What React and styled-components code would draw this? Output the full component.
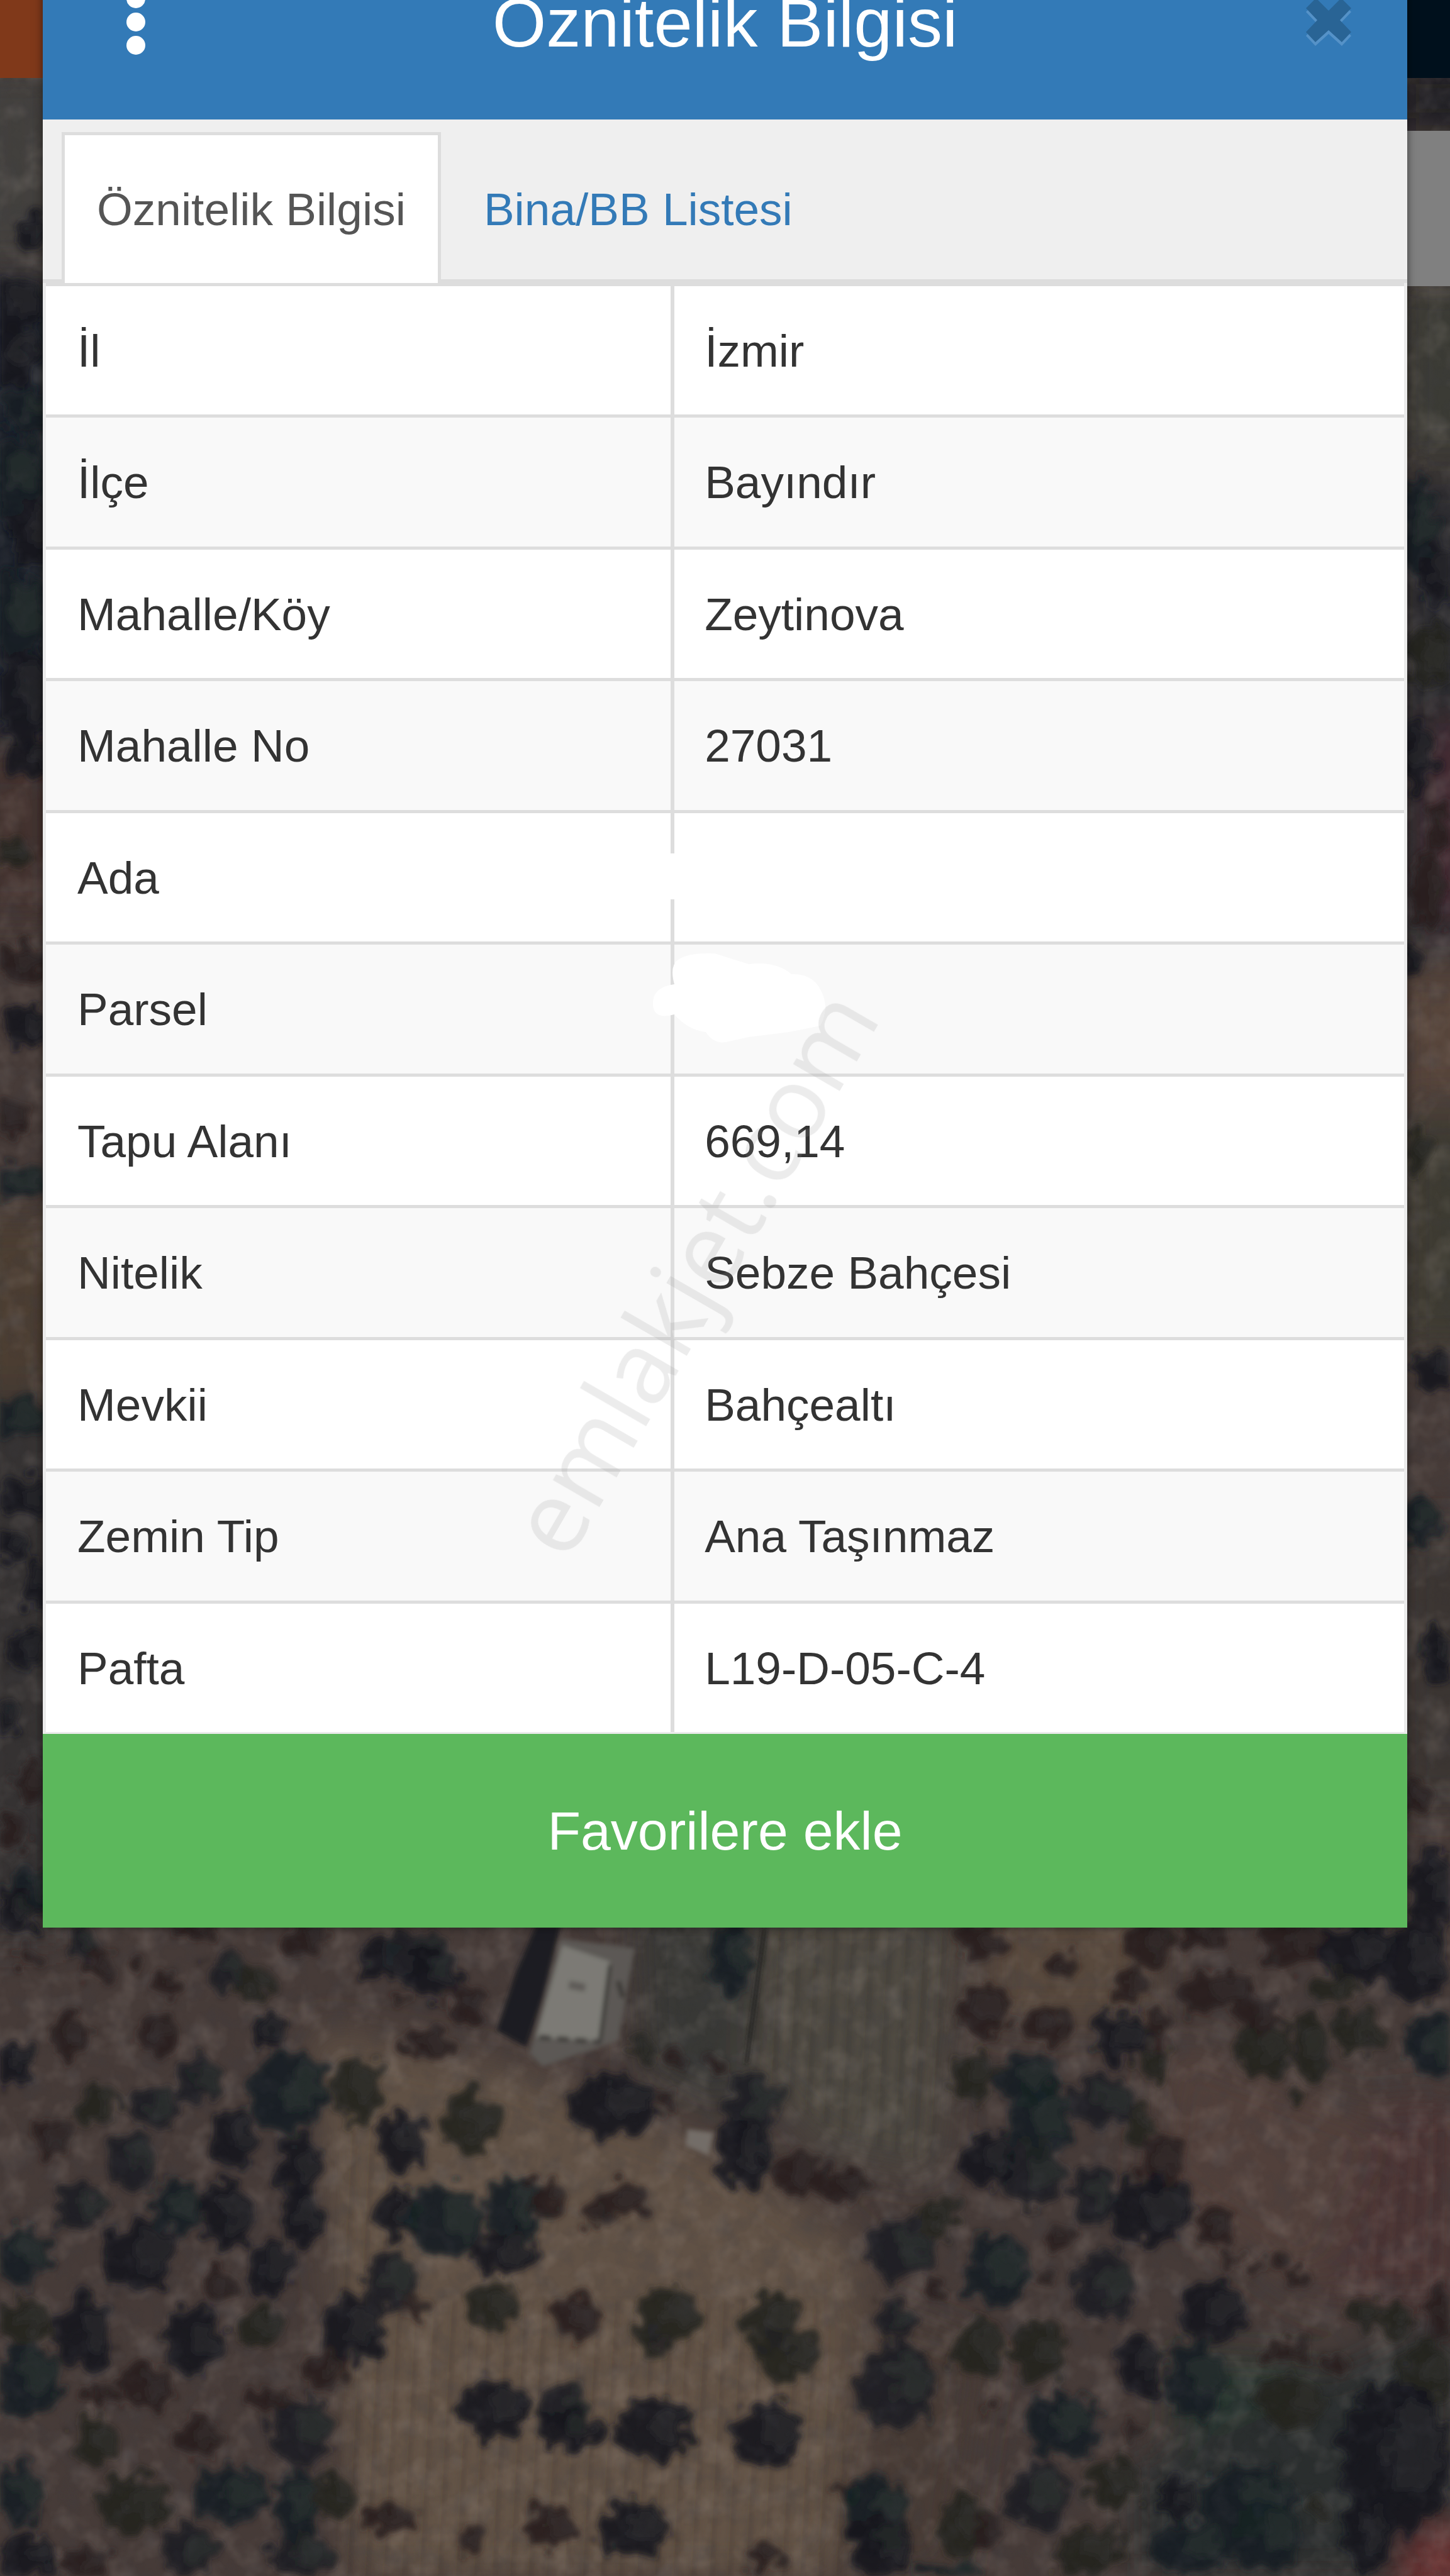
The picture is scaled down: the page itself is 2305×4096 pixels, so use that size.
import React, { useState } from 'react'
import styled, { createGlobalStyle } from 'styled-components'

const GlobalStyle = createGlobalStyle`
  * {
    box-sizing: border-box;
  }
  body {
    margin: 0;
    background: #3f3835;
    font-family: "Liberation Sans", Arial, sans-serif;
  }
`

const Page = styled.div`
  position: relative;
  min-height: 100vh;
  overflow: hidden;
`

const MapLayer = styled.svg`
  position: absolute;
  inset: 0;
  width: 100%;
  height: 100%;
`

const AppBar = styled.div`
  position: absolute;
  top: 0;
  left: 0;
  right: 0;
  height: 124px;
  background: linear-gradient(90deg, #80391a 50%, #00101c 50%);
`

const SidePanel = styled.div`
  position: absolute;
  top: 208px;
  right: 0;
  width: 120px;
  height: 247px;
  background: #808080;
`

/* the top of the dialog is scrolled out of view */
const Modal = styled.main`
  position: relative;
  margin: -120px 68px 0;
  background: #fff;
  box-shadow: 0 0 14px rgba(0, 0, 0, 0.5);
`

const Header = styled.header`
  display: grid;
  grid-template-columns: 180px 1fr 180px;
  align-items: center;
  justify-items: center;
  height: 310px;
  padding: 0 35px;
  background: #337ab7;
`

const Title = styled.h1`
  margin: 0;
  color: #fff;
  font-size: 110px;
  font-weight: 400;
`

const IconButton = styled.button`
  display: flex;
  padding: 20px;
  border: none;
  background: transparent;
  cursor: pointer;
`

const MenuButton = styled(IconButton)`
  justify-self: end;
  padding-right: 50px;
`

const Tabs = styled.div`
  display: flex;
  gap: 12px;
  padding: 20px 30px 0;
  background: #efefef;
  box-shadow: inset 0 -6px 0 #ddd;
`

const Tab = styled.button`
  height: 240px;
  padding: 0 51px;
  border: 5px solid ${(props) => (props.$active ? '#ddd' : 'transparent')};
  border-bottom: none;
  background: ${(props) => (props.$active ? '#fff' : 'transparent')};
  color: ${(props) => (props.$active ? '#555' : '#337ab7')};
  font-family: inherit;
  font-size: 73px;
  cursor: pointer;
`

const InfoTable = styled.table`
  width: 100%;
  table-layout: fixed;
  border-collapse: separate;
  border-spacing: 0;
  border: 5px solid #ebebeb;
  border-width: 0 5px 3px;
`

const Row = styled.tr`
  height: 209px;
  background: #fff;

  &:nth-child(even) {
    height: 210px;
    background: #f9f9f9;
  }
`

const Label = styled.th`
  width: 46%;
  padding: 0 50px;
  border-top: 5px solid #ddd;
  color: #333;
  font-size: 73px;
  font-weight: 400;
  text-align: left;
`

const Value = styled.td`
  position: relative;
  padding: 0 48px;
  border-top: 5px solid #ddd;
  border-left: 6px solid #ddd;
  color: #333;
  font-size: 73px;
`

const Eraser = styled.span`
  position: absolute;
  top: 64px;
  left: -10px;
  width: 240px;
  height: 73px;
  background: #fff;
`

const Smudge = styled.svg`
  position: absolute;
  top: 12px;
  left: -36px;
  width: 278px;
  height: 146px;
`

const FavoriteButton = styled.button`
  display: block;
  width: 100%;
  height: 308px;
  border: none;
  background: #5cb85c;
  color: #fff;
  font-family: inherit;
  font-size: 86px;
  cursor: pointer;
`

const Watermark = styled.span`
  position: absolute;
  top: 2021px;
  left: 1098px;
  color: rgba(140, 140, 140, 0.17);
  font-family: "Open Sans", sans-serif;
  font-size: 160px;
  line-height: 1;
  transform: translate(-50%, -50%) rotate(-60deg);
  pointer-events: none;
`

const rows = [
  { label: 'İl', value: 'İzmir' },
  { label: 'İlçe', value: 'Bayındır' },
  { label: 'Mahalle/Köy', value: 'Zeytinova' },
  { label: 'Mahalle No', value: '27031' },
  { label: 'Ada', value: '', mark: 'eraser' },
  { label: 'Parsel', value: '', mark: 'smudge' },
  { label: 'Tapu Alanı', value: '669,14' },
  { label: 'Nitelik', value: 'Sebze Bahçesi' },
  { label: 'Mevkii', value: 'Bahçealtı' },
  { label: 'Zemin Tip', value: 'Ana Taşınmaz' },
  { label: 'Pafta', value: 'L19-D-05-C-4' },
]

// trees: [cx, cy, rx, ry, tone]
const tones = ['#14171d', '#1b2024', '#261d1c', '#172124', '#24231f']

const westTrees = [
  [60, 130, 28, 28, 2], [30, 30, 50, 50, 0], [180, 100, 36, 36, 1], [215, 155, 30, 40, 2], [300, 155, 20, 20, 2],
  [360, 195, 34, 28, 2], [425, 75, 40, 20, 2], [490, 165, 38, 50, 1], [550, 190, 38, 45, 4], [655, 95, 50, 40, 2],
  [820, 135, 38, 55, 0], [900, 130, 70, 60, 1], [935, 170, 60, 60, 0], [1010, 245, 42, 45, 2], [860, 235, 18, 18, 2],
  [150, 320, 45, 50, 2], [340, 315, 46, 50, 2], [580, 305, 34, 40, 0], [30, 380, 44, 55, 0],
  [925, 335, 60, 32, 2], [215, 475, 40, 52, 4], [330, 480, 55, 50, 1], [425, 425, 50, 50, 1], [620, 450, 88, 90, 3],
  [770, 440, 52, 78, 4], [1015, 520, 58, 80, 4], [865, 565, 52, 68, 0], [1320, 480, 90, 75, 0], [1385, 350, 28, 26, 4],
  [1460, 370, 22, 26, 2], [1535, 390, 22, 26, 2], [1440, 465, 24, 26, 2], [105, 560, 40, 42, 2], [290, 610, 55, 70, 1],
  [505, 555, 50, 70, 0], [645, 620, 50, 70, 0], [650, 740, 42, 70, 0], [170, 720, 60, 55, 1], [385, 715, 62, 60, 3],
  [490, 730, 55, 85, 0], [860, 730, 50, 60, 0], [960, 750, 80, 85, 3], [1110, 720, 60, 80, 3], [1090, 820, 70, 55, 0],
  [1180, 690, 38, 50, 2], [1345, 700, 58, 42, 2], [1280, 735, 30, 26, 2], [45, 830, 60, 72, 3], [300, 830, 80, 82, 0],
  [580, 855, 50, 66, 0], [470, 895, 38, 34, 2], [840, 890, 60, 70, 1], [890, 950, 26, 24, 2], [760, 1000, 70, 75, 0],
  [1065, 945, 52, 56, 4], [1245, 975, 58, 48, 2], [1440, 970, 70, 70, 4], [1415, 1030, 35, 32, 4], [50, 980, 70, 50, 4],
  [185, 1010, 64, 86, 0], [420, 1025, 64, 78, 0], [560, 995, 48, 50, 4], [55, 1115, 75, 85, 3], [315, 1135, 54, 55, 2],
  [220, 1150, 34, 20, 2], [700, 1095, 44, 44, 2], [580, 1160, 40, 30, 2], [1065, 1185, 74, 72, 0], [1220, 1180, 55, 55, 1],
  [1230, 1235, 72, 50, 0], [1410, 1235, 84, 74, 0], [650, 1240, 70, 76, 1], [205, 1260, 46, 52, 4], [425, 1250, 50, 50, 2],
  [40, 1385, 56, 72, 3], [290, 1405, 76, 66, 4], [495, 1385, 80, 66, 3], [640, 1410, 45, 82, 3], [720, 1385, 40, 44, 4],
  [840, 1440, 60, 34, 2], [1015, 1490, 30, 36, 2], [1190, 1460, 54, 56, 2], [1370, 1465, 76, 68, 0], [60, 1525, 62, 54, 0],
  [405, 1515, 60, 62, 1], [180, 1545, 48, 44, 2], [650, 1530, 70, 54, 1],
]

const eastTrees = [
  [20, 140, 45, 90, 3], [555, 100, 56, 45, 2], [730, 155, 34, 34, 2], [920, 105, 50, 50, 2], [880, 200, 36, 50, 2],
  [1040, 90, 50, 30, 2], [1060, 215, 80, 50, 2], [1230, 100, 70, 55, 2], [1370, 120, 80, 70, 0], [1490, 150, 70, 90, 0],
  [1320, 205, 60, 30, 4], [560, 260, 60, 58, 2], [690, 290, 54, 42, 2], [855, 320, 60, 60, 0], [935, 300, 24, 50, 2],
  [1165, 350, 62, 70, 4], [1150, 270, 50, 36, 2], [1265, 340, 36, 80, 4], [1370, 305, 55, 54, 4], [1530, 340, 60, 80, 3],
  [1240, 465, 18, 18, 4], [65, 480, 56, 80, 1], [40, 590, 56, 80, 0], [155, 640, 55, 52, 2], [255, 665, 52, 46, 2],
  [540, 410, 50, 60, 4], [655, 420, 62, 66, 3], [680, 520, 70, 90, 3], [665, 640, 66, 80, 1], [570, 605, 58, 66, 0],
  [815, 470, 68, 62, 1], [895, 520, 30, 50, 4], [930, 380, 34, 40, 4], [945, 610, 52, 60, 2], [920, 725, 96, 76, 0],
  [800, 690, 45, 66, 1], [1060, 760, 40, 52, 2], [1090, 840, 22, 26, 2], [1145, 858, 20, 18, 2], [1200, 835, 20, 18, 2],
  [1240, 880, 26, 22, 2], [380, 815, 76, 70, 1], [460, 740, 44, 50, 4], [590, 865, 70, 84, 3], [465, 915, 24, 24, 2],
  [820, 900, 68, 82, 1], [1055, 960, 68, 70, 0], [725, 785, 34, 18, 2], [700, 880, 14, 18, 2], [370, 975, 42, 44, 1],
  [105, 980, 60, 70, 4], [140, 1060, 62, 60, 4], [375, 1130, 84, 100, 1], [550, 1040, 56, 70, 4], [685, 1050, 60, 70, 4],
  [900, 1085, 50, 66, 0], [1015, 1115, 62, 88, 3], [1385, 960, 44, 34, 4], [1455, 980, 34, 34, 4], [1545, 955, 30, 66, 2],
  [1230, 1050, 34, 28, 2], [1325, 1080, 20, 28, 2], [1180, 1060, 30, 26, 2], [1225, 1170, 76, 56, 4], [1520, 1100, 60, 70, 4],
  [95, 1245, 74, 78, 0], [730, 1220, 78, 80, 3], [580, 1190, 16, 20, 2], [875, 1240, 16, 18, 2], [1450, 1300, 120, 180, 0],
  [270, 1385, 24, 30, 2], [325, 1430, 70, 90, 3], [340, 1500, 66, 80, 0], [680, 1390, 64, 82, 1], [840, 1360, 56, 60, 4],
  [980, 1395, 40, 56, 0], [1130, 1400, 100, 80, 3], [1010, 1510, 90, 60, 3], [1170, 1480, 76, 80, 3], [515, 1455, 52, 74, 4],
  [570, 1470, 24, 30, 2], [790, 1515, 74, 60, 4], [1285, 1420, 22, 24, 4], [1385, 1480, 50, 90, 0], [85, 1530, 44, 32, 2],
  [480, 1560, 80, 16, 3],
]

// shrubs that show in the gutters beside the dialog
const gutterTrees = [
  [20, 141, 9, 12, 0], [8, 185, 18, 18, 0], [6, 215, 16, 20, 0], [18, 250, 16, 14, 3], [8, 290, 18, 24, 3],
  [20, 325, 14, 20, 0], [8, 375, 20, 26, 3], [14, 425, 18, 30, 0], [18, 462, 14, 12, 0], [6, 520, 12, 10, 4],
  [12, 585, 20, 10, 2], [16, 625, 13, 14, 0], [4, 680, 12, 14, 2], [10, 720, 20, 10, 3], [10, 862, 20, 12, 3],
  [16, 912, 16, 12, 0], [6, 940, 12, 10, 0], [22, 965, 8, 16, 0], [14, 1005, 10, 14, 0], [4, 1045, 8, 12, 0],
  [18, 1085, 8, 12, 2], [8, 1115, 9, 11, 2], [20, 1150, 14, 14, 3], [862, 320, 12, 30, 3], [874, 350, 12, 20, 0],
  [870, 400, 14, 18, 4], [862, 460, 10, 24, 0], [876, 505, 6, 16, 2], [869, 545, 9, 26, 2], [860, 585, 8, 10, 0],
  [862, 700, 8, 12, 4], [874, 835, 14, 14, 0], [862, 925, 14, 14, 3], [874, 1005, 10, 18, 0], [862, 1095, 9, 11, 2],
  [872, 1150, 16, 26, 0],
]

// each tree is a dark crown with a slightly lit patch on its right side
const renderTrees = (list) =>
  list.map(([cx, cy, rx, ry, tone], i) => (
    <g key={i}>
      <ellipse cx={cx} cy={cy} rx={rx} ry={ry} fill={tones[tone]} opacity="0.92" />
      <ellipse cx={cx + rx * 0.35} cy={cy - ry * 0.15} rx={rx * 0.5} ry={ry * 0.55} fill="#4a4c48" opacity="0.25" />
    </g>
  ))

const SatelliteMap = () => (
  <MapLayer viewBox="0 0 882 1568" preserveAspectRatio="none" aria-hidden="true">
    <defs>
      <filter id="soft" x="-10%" y="-10%" width="120%" height="120%">
        <feGaussianBlur stdDeviation="12" />
      </filter>
      <filter id="faint" x="-10%" y="-10%" width="120%" height="120%">
        <feGaussianBlur stdDeviation="1.4" />
      </filter>
      <filter id="leafy" filterUnits="userSpaceOnUse" x="0" y="0" width="882" height="1568">
        <feTurbulence type="fractalNoise" baseFrequency="0.11" numOctaves="3" seed="4" result="noise" />
        <feDisplacementMap in="SourceGraphic" in2="noise" scale="22" xChannelSelector="R" yChannelSelector="G" result="bent" />
        <feGaussianBlur in="bent" stdDeviation="1.8" />
      </filter>
      <filter id="grain" x="0" y="0" width="100%" height="100%">
        <feTurbulence type="fractalNoise" baseFrequency="0.06" numOctaves="3" seed="9" />
        <feColorMatrix values="0 0 0 0 0.46  0 0 0 0 0.4  0 0 0 0 0.36  1.4 0 0 0 -0.6" />
      </filter>
      <filter id="shade" x="0" y="0" width="100%" height="100%">
        <feTurbulence type="fractalNoise" baseFrequency="0.08" numOctaves="3" seed="21" />
        <feColorMatrix values="0 0 0 0 0.05  0 0 0 0 0.05  0 0 0 0 0.06  0 2 0 0 -0.9" />
      </filter>
      <pattern id="furrows" width="11" height="40" patternUnits="userSpaceOnUse" patternTransform="rotate(3)">
        <path d="M3 0v40" stroke="#75654f" strokeWidth="3" opacity="0.14" />
        <path d="M8 0v40" stroke="#2c2824" strokeWidth="2" opacity="0.1" />
      </pattern>
    </defs>

    <rect width="882" height="1568" fill="#463b38" />
    <g filter="url(#soft)">
      <rect x="-20" y="40" width="60" height="120" fill="#423f3c" />
      <rect x="-20" y="170" width="60" height="280" fill="#1c242b" />
      <rect x="-20" y="460" width="60" height="100" fill="#42332f" />
      <rect x="-20" y="740" width="60" height="110" fill="#4b3d32" />
      <rect x="-20" y="850" width="60" height="330" fill="#343330" />
      <rect x="850" y="40" width="60" height="40" fill="#1c1f22" />
      <rect x="850" y="170" width="60" height="110" fill="#3a3b35" />
      <rect x="850" y="290" width="60" height="290" fill="#2c2c2d" />
      <rect x="870" y="440" width="30" height="120" fill="#472a30" />
      <rect x="850" y="590" width="60" height="80" fill="#57453a" />
      <rect x="850" y="680" width="60" height="140" fill="#3d3a33" />
      <rect x="850" y="930" width="60" height="170" fill="#3a3633" />
      <path d="M190 1235 L320 1262 L450 1315 L525 1370 L510 1568 L215 1568 L205 1400 Z" fill="#615145" />
      <path d="M462 1160 H585 L570 1325 L500 1310 L455 1260 Z" fill="#4b4740" />
      <path d="M385 1160 H462 L450 1290 L390 1260 Z" fill="#393935" />
      <path d="M600 1160 H700 V1230 H600 Z" fill="#58483d" />
      <path d="M710 1240 L840 1290 L800 1400 L700 1330 Z" fill="#51413b" />
      <path d="M840 1280 H890 V1400 L805 1400 Z" fill="#4b3534" />
      <path d="M715 1435 L800 1440 L790 1500 L720 1495 Z" fill="#25352e" />
      <path d="M690 1500 L882 1410 V1568 H690 Z" fill="#2b2e2d" />
      <path d="M520 1400 L600 1430 L580 1568 L520 1568 Z" fill="#463b34" />
      <path d="M855 1540 H900 V1590 H855 Z" fill="#6b2e2e" />
    </g>
    <g filter="url(#faint)">
      <path d="M465 1174 H584 L566 1318 L510 1300 L456 1262 Z" fill="url(#furrows)" />
      <path d="M205 1300 L240 1290 L245 1400 L500 1400 L525 1568 L205 1568 Z" fill="url(#furrows)" />
      <path d="M846 1300 L882 1290 V1390 L812 1400 Z" fill="url(#furrows)" opacity="0.6" />
    </g>
    <rect width="882" height="1568" filter="url(#grain)" opacity="0.3" />

    <g filter="url(#leafy)">
      {renderTrees(gutterTrees)}
      <g transform="translate(0 1156) scale(0.282 0.262)">{renderTrees(westTrees)}</g>
      <g transform="translate(440 1156) scale(0.282 0.262)">{renderTrees(eastTrees)}</g>
    </g>
    <rect width="882" height="1568" filter="url(#shade)" opacity="0.3" />

    {/* farm building with its shadow */}
    <g filter="url(#faint)">
      <path d="M326 1172 L341 1172 L330 1216 L320 1246 L302 1236 L314 1200 Z" fill="#1c1d20" />
      <path d="M341 1180 L386 1186 L376 1242 L330 1258 L322 1250 Z" fill="#5b5854" />
      <path d="M342 1184 L371 1194 L364 1242 L326 1240 Z" fill="#7c7a75" />
      <path d="M371 1196 L365 1242" stroke="#33322f" strokeWidth="2" fill="none" />
      <path d="M328 1240 L366 1243" stroke="#403e3b" strokeWidth="3" strokeDasharray="7 4" fill="none" />
      <path d="M346 1208 l10 2" stroke="#5e5c58" strokeWidth="5" fill="none" />
      <path d="M376 1206 l3 10" stroke="#3a3936" strokeWidth="3" fill="none" />
      <path d="M418 1296 L434 1298 L431 1312 L417 1306 Z" fill="#736d67" />
      <path d="M465 1174 L454 1256" stroke="#1d1d1c" strokeWidth="2" fill="none" />
    </g>
  </MapLayer>
)

const MenuIcon = () => (
  <svg width="34" height="108" viewBox="0 0 34 108" fill="#fff" aria-hidden="true">
    <circle cx="17" cy="17" r="15" />
    <circle cx="17" cy="54" r="15" />
    <circle cx="17" cy="91" r="15" />
  </svg>
)

const CloseIcon = () => (
  <svg width="76" height="82" viewBox="0 0 76 82" aria-hidden="true">
    <path d="M18 9 38 29 58 9 74 25 56 44 74 63 59 79 38 60 17 79 2 63 20 44 2 25Z" fill="#5592c8" />
    <path d="M18 3 38 23 58 3 74 19 56 38 74 57 59 73 38 54 17 73 2 57 20 38 2 19Z" fill="#296495" />
  </svg>
)

const App = () => {
  const [tab, setTab] = useState('info')
  return (
    <>
      <GlobalStyle />
      <Page>
        <SatelliteMap />
        <AppBar />
        <SidePanel />
        <Modal>
          <Header>
            <MenuButton aria-label="Menü">
              <MenuIcon />
            </MenuButton>
            <Title>Öznitelik Bilgisi</Title>
            <IconButton aria-label="Kapat">
              <CloseIcon />
            </IconButton>
          </Header>
          <Tabs role="tablist">
            <Tab role="tab" aria-selected={tab === 'info'} $active={tab === 'info'} onClick={() => setTab('info')}>
              Öznitelik Bilgisi
            </Tab>
            <Tab role="tab" aria-selected={tab === 'list'} $active={tab === 'list'} onClick={() => setTab('list')}>
              Bina/BB Listesi
            </Tab>
          </Tabs>
          <InfoTable>
            <tbody>
              {rows.map((row) => (
                <Row key={row.label}>
                  <Label scope="row">{row.label}</Label>
                  <Value>
                    {row.value}
                    {row.mark === 'eraser' && <Eraser />}
                    {row.mark === 'smudge' && (
                      <Smudge viewBox="0 0 278 146" aria-hidden="true">
                        <path
                          d="M36 51 Q28 22 42 12 Q60 0 100 2 L154 19 Q198 14 222 35 Q255 34 268 59 Q284 88 268 117 L218 127 L154 135 L118 143 Q98 146 86 127 Q58 124 36 99 Q4 108 2 84 Q0 56 36 51Z"
                          fill="#fff"
                        />
                      </Smudge>
                    )}
                  </Value>
                </Row>
              ))}
            </tbody>
          </InfoTable>
          <FavoriteButton>Favorilere ekle</FavoriteButton>
        </Modal>
        <Watermark>emlakjet.com</Watermark>
      </Page>
    </>
  )
}

export default App
